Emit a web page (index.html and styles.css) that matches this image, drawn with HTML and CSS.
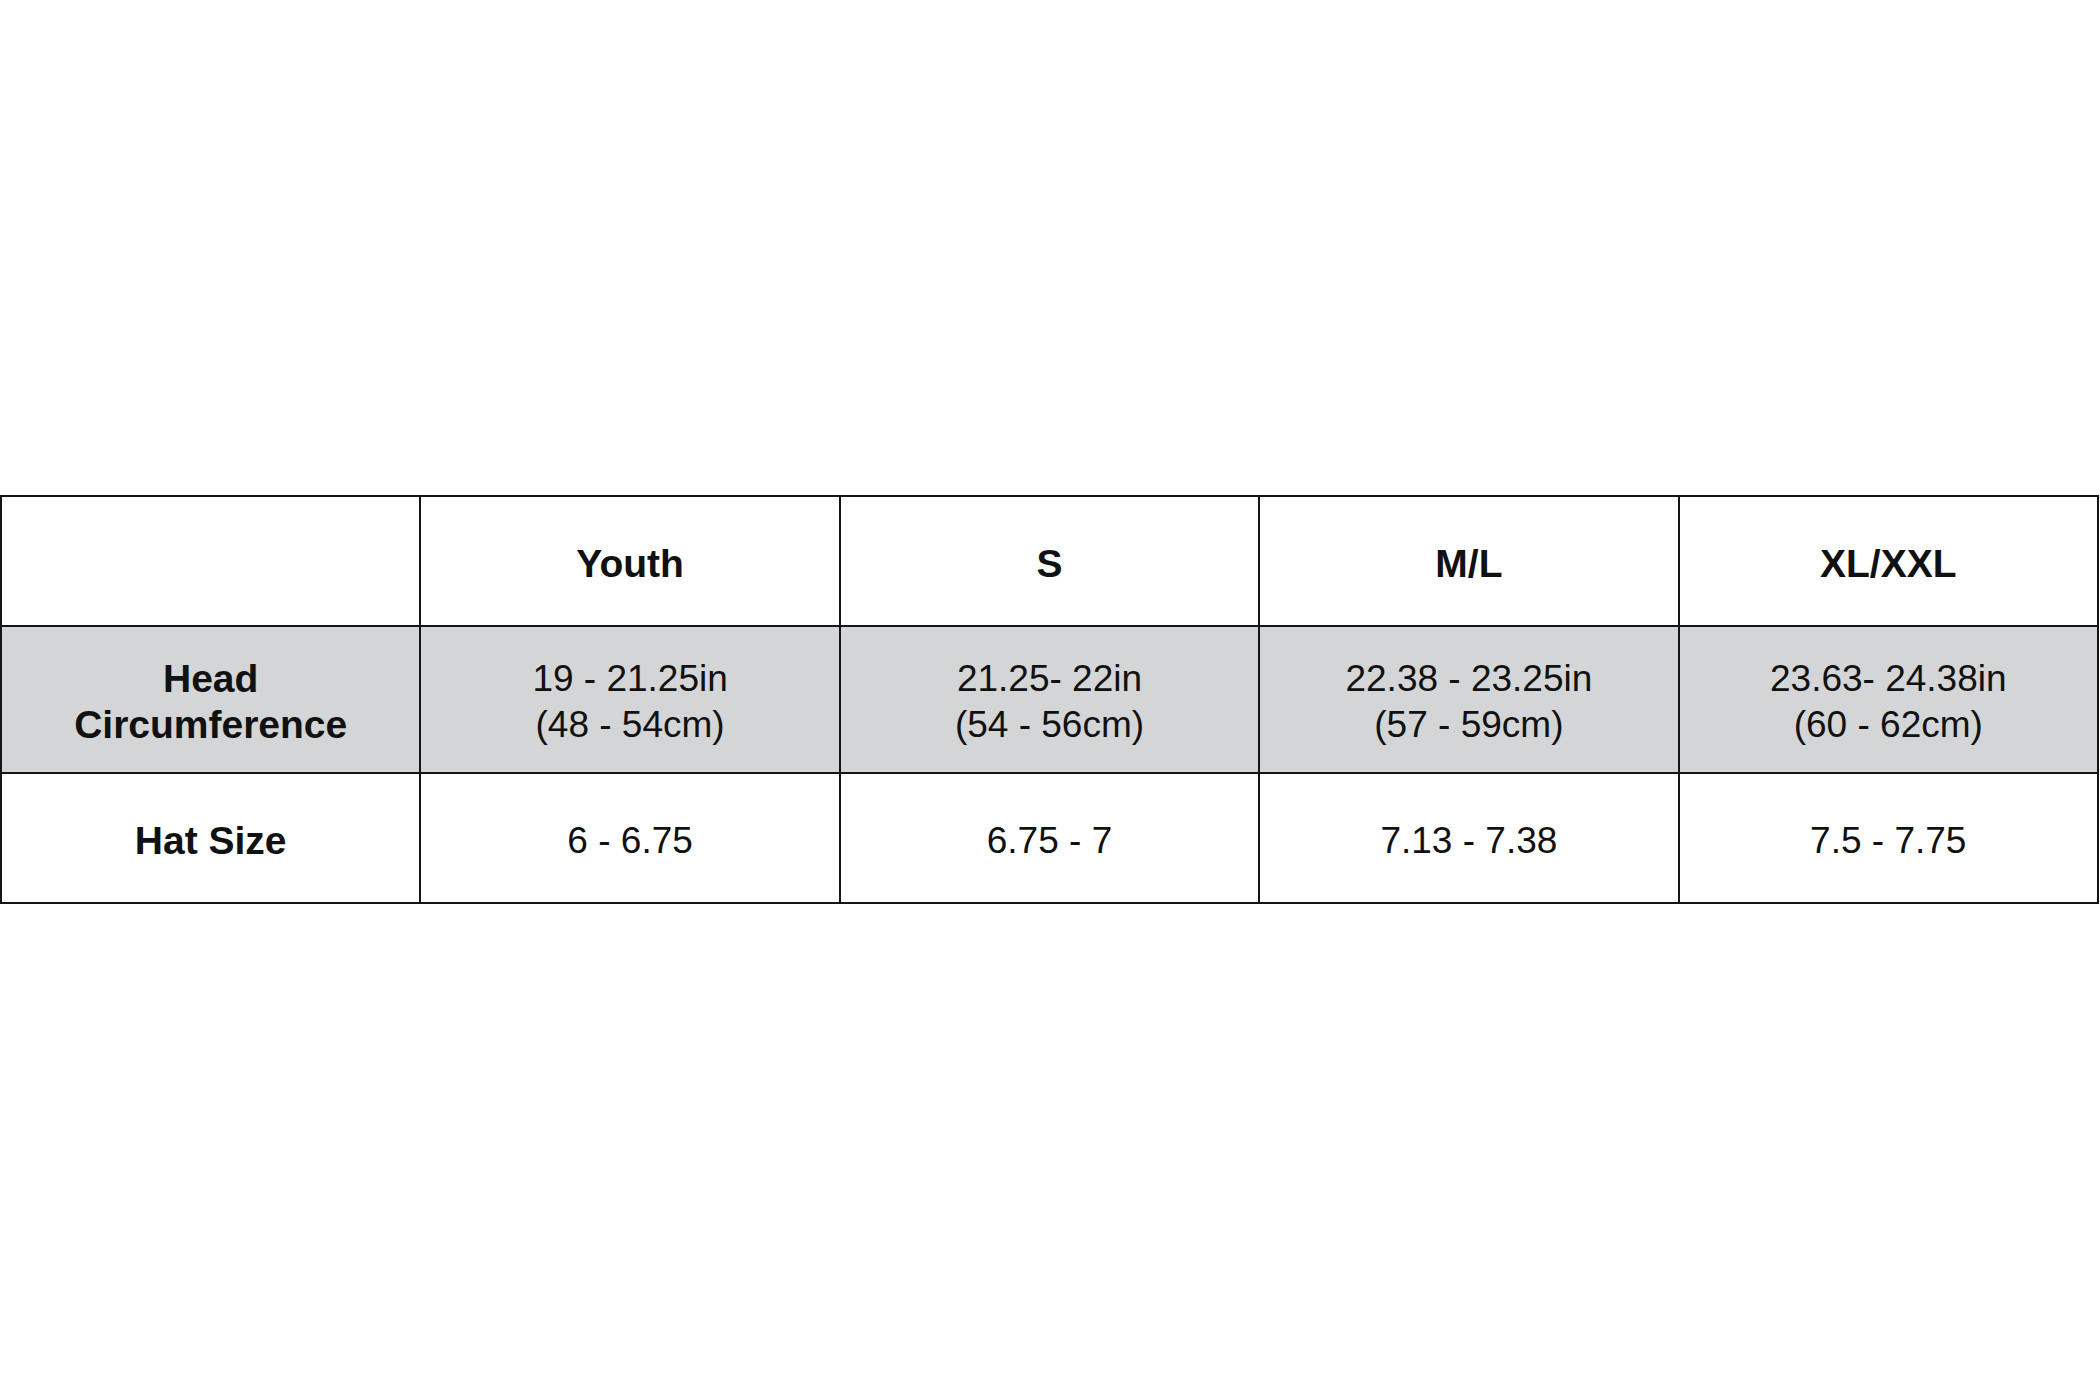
FILE: index.html
```html
<!DOCTYPE html>
<html lang="en">
<head>
<meta charset="utf-8">
<title>Size Chart</title>
<link rel="stylesheet" href="styles.css">
</head>
<body>
<div class="chart">
  <div class="cell head-row"></div>
  <div class="cell head-row label">Youth</div>
  <div class="cell head-row label">S</div>
  <div class="cell head-row label">M/L</div>
  <div class="cell head-row label">XL/XXL</div>

  <div class="cell mid-row shade label">Head<br>Circumference</div>
  <div class="cell mid-row shade value">19 - 21.25in<br>(48 - 54cm)</div>
  <div class="cell mid-row shade value">21.25- 22in<br>(54 - 56cm)</div>
  <div class="cell mid-row shade value">22.38 - 23.25in<br>(57 - 59cm)</div>
  <div class="cell mid-row shade value">23.63- 24.38in<br>(60 - 62cm)</div>

  <div class="cell last-row label">Hat Size</div>
  <div class="cell last-row value">6 - 6.75</div>
  <div class="cell last-row value">6.75 - 7</div>
  <div class="cell last-row value">7.13 - 7.38</div>
  <div class="cell last-row value">7.5 - 7.75</div>
</div>
</body>
</html>
```

FILE: styles.css
```css
html, body {
  margin: 0;
  padding: 0;
  background: #ffffff;
}

body {
  width: 2100px;
  height: 1400px;
  overflow: hidden;
  font-family: "Liberation Sans", Arial, sans-serif;
  color: #111111;
}

.chart {
  margin-top: 495px;
  width: 2099px;
  box-sizing: border-box;
  display: grid;
  grid-template-columns: repeat(5, 1fr);
  border-top: 2px solid #151515;
  border-left: 2px solid #151515;
}

.cell {
  box-sizing: border-box;
  border-right: 2px solid #151515;
  border-bottom: 2px solid #151515;
  padding-top: 5px;
  display: flex;
  align-items: center;
  justify-content: center;
  text-align: center;
}

.head-row { height: 130px; }
.mid-row { height: 147px; }
.last-row { height: 130px; }

.shade { background: #d4d5d6; }

.label {
  font-weight: bold;
  font-size: 39px;
  line-height: 46px;
}

.value {
  font-weight: normal;
  font-size: 37px;
  line-height: 46px;
}
```
